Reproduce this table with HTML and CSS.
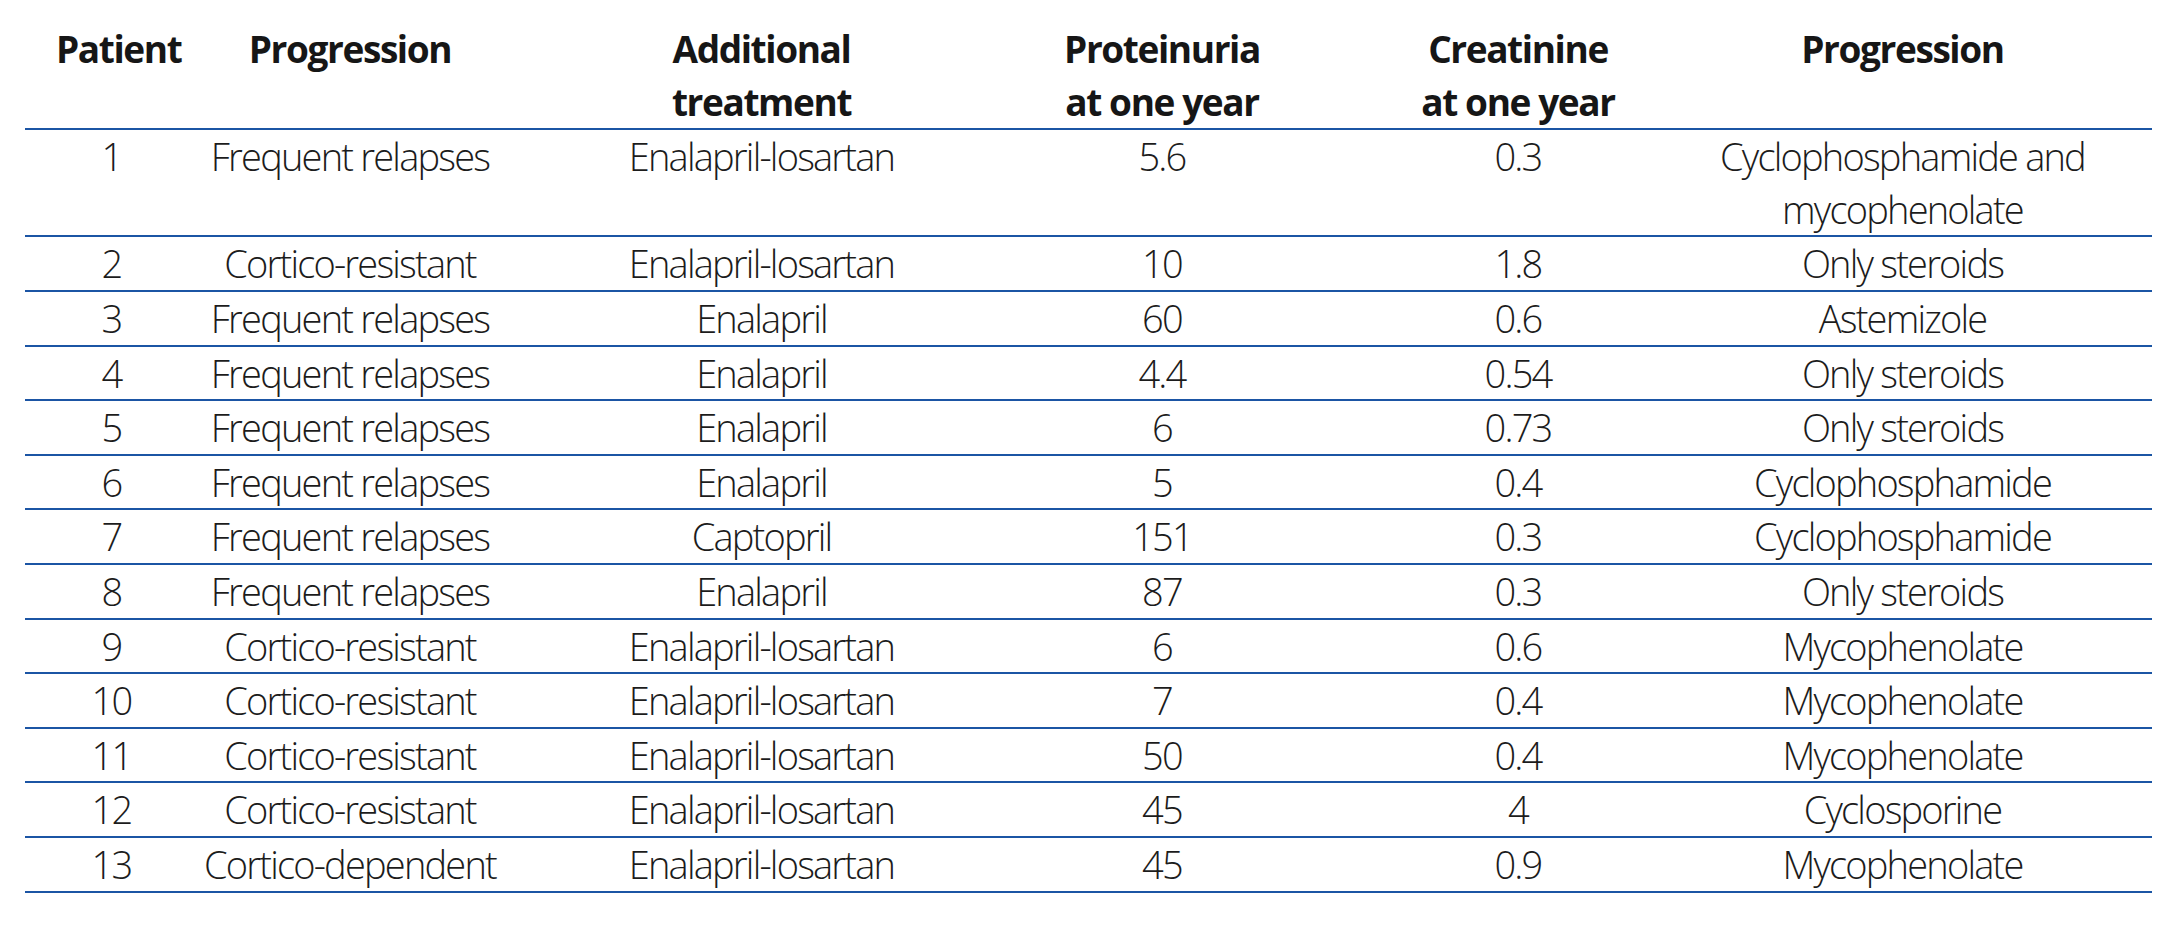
FILE: index.html
```html
<!DOCTYPE html>
<html lang="en">
<head>
<meta charset="utf-8">
<title>Patients</title>
<link rel="stylesheet" href="styles.css">
</head>
<body>
<table class="data">
  <colgroup>
    <col class="c1"><col class="c2"><col class="c3"><col class="c4"><col class="c5"><col class="c6">
  </colgroup>
  <thead>
    <tr>
      <th>Patient</th>
      <th>Progression</th>
      <th>Additional<br>treatment</th>
      <th>Proteinuria<br>at one year</th>
      <th>Creatinine<br>at one year</th>
      <th>Progression</th>
    </tr>
  </thead>
  <tbody>
    <tr><td>1</td><td>Frequent relapses</td><td>Enalapril-losartan</td><td>5.6</td><td>0.3</td><td>Cyclophosphamide and<br>mycophenolate</td></tr>
    <tr><td>2</td><td>Cortico-resistant</td><td>Enalapril-losartan</td><td>10</td><td>1.8</td><td>Only steroids</td></tr>
    <tr><td>3</td><td>Frequent relapses</td><td>Enalapril</td><td>60</td><td>0.6</td><td>Astemizole</td></tr>
    <tr><td>4</td><td>Frequent relapses</td><td>Enalapril</td><td>4.4</td><td>0.54</td><td>Only steroids</td></tr>
    <tr><td>5</td><td>Frequent relapses</td><td>Enalapril</td><td>6</td><td>0.73</td><td>Only steroids</td></tr>
    <tr><td>6</td><td>Frequent relapses</td><td>Enalapril</td><td>5</td><td>0.4</td><td>Cyclophosphamide</td></tr>
    <tr><td>7</td><td>Frequent relapses</td><td>Captopril</td><td>151</td><td>0.3</td><td>Cyclophosphamide</td></tr>
    <tr><td>8</td><td>Frequent relapses</td><td>Enalapril</td><td>87</td><td>0.3</td><td>Only steroids</td></tr>
    <tr><td>9</td><td>Cortico-resistant</td><td>Enalapril-losartan</td><td>6</td><td>0.6</td><td>Mycophenolate</td></tr>
    <tr><td>10</td><td>Cortico-resistant</td><td>Enalapril-losartan</td><td>7</td><td>0.4</td><td>Mycophenolate</td></tr>
    <tr><td>11</td><td>Cortico-resistant</td><td>Enalapril-losartan</td><td>50</td><td>0.4</td><td>Mycophenolate</td></tr>
    <tr><td>12</td><td>Cortico-resistant</td><td>Enalapril-losartan</td><td>45</td><td>4</td><td>Cyclosporine</td></tr>
    <tr><td>13</td><td>Cortico-dependent</td><td>Enalapril-losartan</td><td>45</td><td>0.9</td><td>Mycophenolate</td></tr>
  </tbody>
</table>
</body>
</html>
```

FILE: styles.css
```css
html, body {
  margin: 0;
  padding: 0;
  background: #ffffff;
}

body {
  padding: 23px 0 0 25px;
  color: #1c1c1c;
  font-family: "Open Sans", "Noto Sans", sans-serif;
}

.data {
  width: 2127px;
  table-layout: fixed;
  border-collapse: collapse;
  border-spacing: 0;
}

.c1 { width: 142px; }
.c2 { width: 366px; }
.c3 { width: 457px; }
.c4 { width: 344px; }
.c5 { width: 368px; }
.c6 { width: 450px; }

.data th,
.data td {
  padding: 0;
  text-align: center;
  vertical-align: top;
  line-height: 52.6px;
  white-space: nowrap;
  border-bottom: 2px solid #1b55a4;
}

.data th {
  font-size: 37px;
  font-weight: 700;
  letter-spacing: -1.4px;
  color: #161616;
}

.data td {
  font-size: 38px;
  font-weight: 300;
  letter-spacing: -1.8px;
}

.data th:first-child,
.data td:first-child {
  padding-left: 31px;
}

.data th:last-child,
.data td:last-child {
  padding-right: 49px;
}
```
